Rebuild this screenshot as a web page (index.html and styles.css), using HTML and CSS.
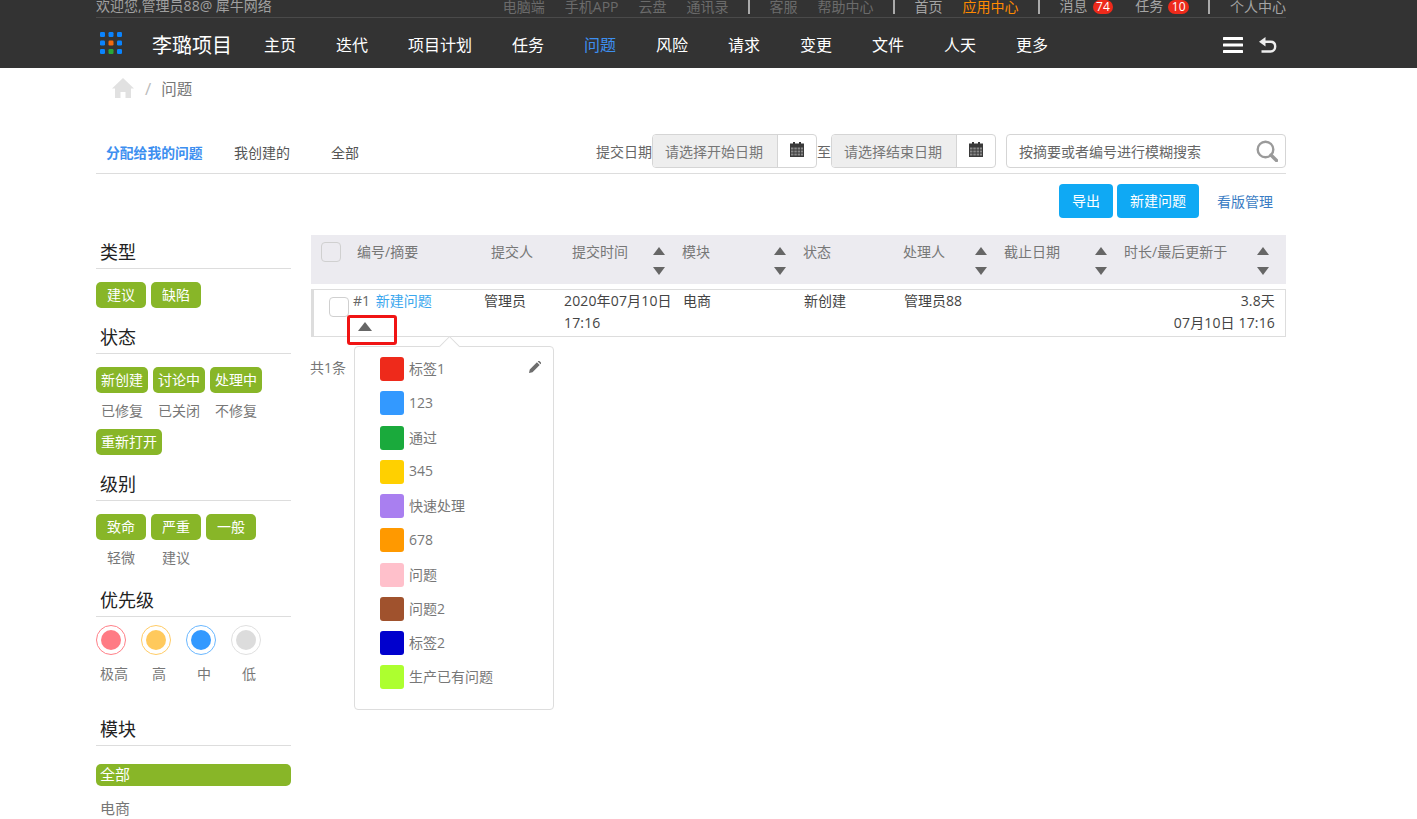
FILE: index.html
```html
<!DOCTYPE html>
<html lang="zh-CN">
<head>
<meta charset="utf-8">
<title>问题</title>
<link rel="stylesheet" href="styles.css">
</head>
<body>
<header class="topbar">
  <div class="wrap">
    <div class="strip">
      <span class="welcome">欢迎您,管理员88@ 犀牛网络</span>
      <div class="strip-links">
        <a class="dim">电脑端</a><a class="dim">手机APP</a><a class="dim">云盘</a><a class="dim">通讯录</a>
        <i class="sep"></i>
        <a class="dim">客服</a><a class="dim">帮助中心</a>
        <i class="sep"></i>
        <a>首页</a><a class="orange">应用中心</a>
        <i class="sep"></i>
        <a class="msg">消息<b class="count">74</b></a><a>任务<b class="count">10</b></a>
        <i class="sep"></i>
        <a>个人中心</a>
      </div>
    </div>
    <nav class="nav">
      <svg class="apps" width="24" height="24" viewBox="0 0 24 24">
        <rect x="1" y="1" width="5" height="5" rx="1.2" fill="#0a84ff"/><rect x="9.500" y="1" width="5" height="5" rx="1.2" fill="#0a84ff"/><rect x="18" y="1" width="5" height="5" rx="1.2" fill="#0a84ff"/>
        <rect x="1" y="9.500" width="5" height="5" rx="1.2" fill="#0a84ff"/><rect x="9.500" y="9.500" width="5" height="5" rx="1.2" fill="#f26a10"/><rect x="18" y="9.500" width="5" height="5" rx="1.2" fill="#0a84ff"/>
        <rect x="1" y="18" width="5" height="5" rx="1.2" fill="#0a84ff"/><rect x="9.500" y="18" width="5" height="5" rx="1.2" fill="#2aa83a"/><rect x="18" y="18" width="5" height="5" rx="1.2" fill="#0a84ff"/>
      </svg>
      <span class="project">李璐项目</span>
      <div class="menu">
        <a>主页</a><a>迭代</a><a class="wide">项目计划</a><a>任务</a><a class="active">问题</a><a>风险</a><a>请求</a><a>变更</a><a>文件</a><a>人天</a><a>更多</a>
      </div>
      <div class="nav-icons">
        <svg width="21" height="16" viewBox="0 0 21 16"><rect y="0" width="20" height="3" rx="0.500" fill="#fff"/><rect y="6.500" width="20" height="3" rx="0.500" fill="#fff"/><rect y="13" width="20" height="3" rx="0.500" fill="#fff"/></svg>
        <svg width="18" height="16" viewBox="0 0 18 16"><path d="M0 4.800 6.500 0V9.600Z" fill="#eee"/><path d="M5 4.800H11.500C14.500 4.800 16.200 6.800 16.200 9.500S14.500 14.500 11.500 14.500H2.500" fill="none" stroke="#eee" stroke-width="2.400"/></svg>
      </div>
    </nav>
  </div>
</header>

<div class="wrap">
  <div class="crumbs">
    <svg width="22" height="20" viewBox="0 0 22 20"><path d="M11 0 0 10.500h3V20h5.500v-6h5v6H19v-9.500h3Z" fill="#e1e1e1"/></svg>
    <span class="slash">/</span>
    <span>问题</span>
  </div>

  <div class="tabs">
    <div class="tab-list">
      <a class="tab on">分配给我的问题</a><a class="tab t2">我创建的</a><a class="tab t3">全部</a>
    </div>
    <div class="filters">
      <span class="flabel">提交日期</span>
      <div class="date"><span class="date-text">请选择开始日期</span><span class="date-btn"><svg width="14" height="15" viewBox="0 0 14 15"><path d="M3 0h2v1.500h4V0h2v1.500h3V15H0V1.500h3Z" fill="#3a3a3a"/><path d="M1 5.500h2.500v2H1Zm3.300 0h2.500v2H4.300Zm3.300 0h2.500v2H7.600Zm3.300 0h2.100v2h-2.100ZM1 8.500h2.500v2H1Zm3.300 0h2.500v2H4.300Zm3.300 0h2.500v2H7.600Zm3.300 0h2.100v2h-2.100ZM1 11.500h2.500v2H1Zm3.300 0h2.500v2H4.300Zm3.300 0h2.500v2H7.600Zm3.300 0h2.100v2h-2.100Z" fill="#8a8a8a"/></svg></span></div>
      <span class="fto">至</span>
      <div class="date"><span class="date-text">请选择结束日期</span><span class="date-btn"><svg width="14" height="15" viewBox="0 0 14 15"><path d="M3 0h2v1.500h4V0h2v1.500h3V15H0V1.500h3Z" fill="#3a3a3a"/><path d="M1 5.500h2.500v2H1Zm3.300 0h2.500v2H4.300Zm3.300 0h2.500v2H7.600Zm3.300 0h2.100v2h-2.100ZM1 8.500h2.500v2H1Zm3.300 0h2.500v2H4.300Zm3.300 0h2.500v2H7.600Zm3.300 0h2.100v2h-2.100ZM1 11.500h2.500v2H1Zm3.300 0h2.500v2H4.300Zm3.300 0h2.500v2H7.600Zm3.300 0h2.100v2h-2.100Z" fill="#8a8a8a"/></svg></span></div>
      <div class="search"><span>按摘要或者编号进行模糊搜索</span>
        <svg width="22" height="22" viewBox="0 0 22 22"><circle cx="9.500" cy="9.500" r="7.800" fill="none" stroke="#9a9a9a" stroke-width="2.400"/><path d="m15 15 5.500 5.500" stroke="#9a9a9a" stroke-width="3.400" stroke-linecap="round"/></svg>
      </div>
    </div>
  </div>

  <div class="actions">
    <a class="btn">导出</a><a class="btn">新建问题</a><a class="board">看版管理</a>
  </div>

  <div class="columns">
    <aside class="side">
      <h3>类型</h3>
      <div class="chips"><a class="chip on w50">建议</a><a class="chip on w50">缺陷</a></div>
      <h3 class="h-state">状态</h3>
      <div class="chips"><a class="chip on">新创建</a><a class="chip on">讨论中</a><a class="chip on">处理中</a><a class="chip">已修复</a><a class="chip">已关闭</a><a class="chip">不修复</a><a class="chip on">重新打开</a></div>
      <h3 class="h-level">级别</h3>
      <div class="chips"><a class="chip on w50">致命</a><a class="chip on w50">严重</a><a class="chip on w50">一般</a><a class="chip w50">轻微</a><a class="chip w50">建议</a></div>
      <h3 class="h-pri">优先级</h3>
      <div class="prio">
        <div class="p"><span class="ring r1"><i></i></span><small>极高</small></div>
        <div class="p"><span class="ring r2"><i></i></span><small>高</small></div>
        <div class="p"><span class="ring r3"><i></i></span><small>中</small></div>
        <div class="p"><span class="ring r4"><i></i></span><small>低</small></div>
      </div>
      <h3 class="h-mod">模块</h3>
      <a class="mod on">全部</a>
      <a class="mod">电商</a>
    </aside>

    <main class="main">
      <div class="thead">
        <span class="check"></span>
        <span>编号/摘要</span>
        <span>提交人</span>
        <span class="sort">提交时间<span class="arrows"><i class="up"></i><i class="down"></i></span></span>
        <span class="sort">模块<span class="arrows"><i class="up"></i><i class="down"></i></span></span>
        <span>状态</span>
        <span class="sort">处理人<span class="arrows"><i class="up"></i><i class="down"></i></span></span>
        <span class="sort">截止日期<span class="arrows"><i class="up"></i><i class="down"></i></span></span>
        <span class="sort">时长/最后更新于<span class="arrows"><i class="up"></i><i class="down"></i></span></span>
      </div>
      <div class="trow">
        <span class="check rowcheck"></span>
        <div class="summary">#1 <a>新建问题</a></div>
        <div>管理员</div>
        <div class="nums">2020年07月10日<br>17:16</div>
        <div>电商</div>
        <div>新创建</div>
        <div>管理员88</div>
        <div></div>
        <div class="right nums">3.8天<br>07月10日 17:16</div>
        <div class="redbox"><i class="up"></i></div>
      </div>
      <div class="total">共1条</div>

      <div class="popup">
        <svg class="edit" width="12" height="12" viewBox="0 0 13 13"><path d="M0 13l.8-3.800L8.600 1.400l3 3-7.800 7.800ZM9.500.5 10 0c.4-.3 1-.3 1.300 0l1.700 1.700c.3.300.3.900 0 1.300l-.5.500Z" fill="#6e6e6e"/></svg>
        <div class="tag"><i class="sw" style="background:#ee2a1b"></i>标签1</div>
        <div class="tag"><i class="sw" style="background:#3399ff"></i>123</div>
        <div class="tag"><i class="sw" style="background:#1aaa3c"></i>通过</div>
        <div class="tag"><i class="sw" style="background:#ffd000"></i>345</div>
        <div class="tag"><i class="sw" style="background:#a97ff0"></i>快速处理</div>
        <div class="tag"><i class="sw" style="background:#ff9900"></i>678</div>
        <div class="tag"><i class="sw" style="background:#ffc0cb"></i>问题</div>
        <div class="tag"><i class="sw" style="background:#a0522d"></i>问题2</div>
        <div class="tag"><i class="sw" style="background:#0000cd"></i>标签2</div>
        <div class="tag"><i class="sw" style="background:#adff2f"></i>生产已有问题</div>
      </div>
    </main>
  </div>
</div>
</body>
</html>
```
FILE: styles.css
```css
* { box-sizing: border-box; }
html, body { margin: 0; height: 819px; overflow: hidden; }
body {
  font-family: "Open Sans", "Noto Sans CJK SC", sans-serif;
  font-size: 14px;
  color: #333;
  background: #fff;
}
a { text-decoration: none; }
.wrap { width: 1190px; margin-left: 96px; }

.topbar { background: #333; height: 68px; }
.strip {
  height: 18px;
  border-bottom: 1px solid #4a4a4a;
  display: flex;
  justify-content: space-between;
  align-items: flex-start;
  line-height: 14px;
  color: #a0a0a0;
}
.welcome { margin-top: -1px; color: #a0a0a0; }
.strip-links { display: flex; align-items: center; margin-top: -1px; }
.strip-links a { color: #a5a5a5; margin-right: 20px; white-space: nowrap; }
.strip-links a.msg { margin-right: 22px; }
.strip-links a:last-child { margin-right: 0; }
.strip-links a.dim { color: #6b6b6b; }
.strip-links a.orange { color: #ff8a00; }
.sep { width: 2px; height: 14px; background: #aaa; margin-right: 20px; margin-left: -1px; }
.count {
  display: inline-block;
  background: #ee2a1b;
  color: #fff;
  border-radius: 7px;
  font-size: 12px;
  font-weight: 400;
  line-height: 14px;
  height: 14px;
  padding: 0 3.500px;
  margin-left: 5px;
}
.nav { height: 50px; display: flex; align-items: center; padding-top: 2px; }
.apps { margin: -2px 0 0 3px; flex: none; }
.project { color: #fff; font-size: 20px; margin-left: 29px; width: 112px; flex: none; white-space: nowrap; }
.menu { display: flex; }
.menu a { color: #fff; font-size: 16px; width: 72px; white-space: nowrap; }
.menu a.wide { width: 104px; }
.menu a.active { color: #3d8ff0; }
.nav-icons { margin-left: auto; display: flex; align-items: center; gap: 15px; padding: 2px 9px 0 0; }

.crumbs {
  height: 42px;
  display: flex;
  align-items: center;
  padding-left: 16px;
  padding-bottom: 1px;
  color: #777;
  font-size: 15.500px;
}
.crumbs svg { margin-top: -2px; }
.slash { color: #bbb; margin: 0 10px 0 11px; font-size: 17px; }

.tabs {
  margin-top: 24px;
  height: 40px;
  border-bottom: 1px solid #ddd;
  display: flex;
  justify-content: space-between;
  align-items: flex-start;
}
.tab-list { display: flex; padding-top: 8px; }
.tab { font-size: 14px; color: #555; }
.tab.t2 { width: 97px; }
.tab.on { color: #3d8ff0; font-weight: 600; font-size: 13.800px; margin-left: 10px; width: 128px; white-space: nowrap; }
.filters { display: flex; align-items: center; }
.flabel, .fto { font-size: 14px; color: #666; white-space: nowrap; }
.flabel { margin-top: -1px; }
.date {
  width: 165px;
  height: 34px;
  border: 1px solid #d5d5d5;
  border-radius: 4px;
  display: flex;
  overflow: hidden;
}
.fto { width: 14px; }
.date-text {
  flex: 1;
  background: #eee;
  color: #777;
  font-size: 14px;
  line-height: 33px;
  padding-left: 12px;
  border-right: 1px solid #d5d5d5;
  white-space: nowrap;
}
.date-btn { width: 38px; flex: none; display: flex; align-items: center; justify-content: center; padding-bottom: 3px; }
.search {
  width: 280px;
  height: 34px;
  margin-left: 10px;
  border: 1px solid #d5d5d5;
  border-radius: 4px;
  display: flex;
  align-items: center;
  justify-content: space-between;
  padding: 0 7px 0 12px;
  font-size: 14px;
  color: #666;
}

.actions {
  height: 34px;
  margin-top: 10px;
  display: flex;
  justify-content: flex-end;
  align-items: center;
}
.btn {
  height: 34px;
  line-height: 33px;
  padding: 0 13px;
  background: #0fa9f4;
  border-radius: 4px;
  color: #fff;
  font-size: 14px;
  margin-right: 4px;
}
.board { color: #3a7cc4; font-size: 14px; margin: 0 13px 0 14px; }

.columns { display: flex; margin-top: 17px; }
.side { width: 195px; flex: none; }
.side h3 {
  margin: 0;
  padding-left: 4px;
  height: 34px;
  line-height: 34px;
  font-size: 18px;
  font-weight: 400;
  color: #222;
  border-bottom: 1px solid #ddd;
}
.side h3.h-state { margin-top: 7px; }
.side h3.h-level { margin-top: 7px; }
.side h3.h-pri { margin-top: 7px; }
.side h3.h-mod { margin-top: 28px; }
.chips { display: flex; flex-wrap: wrap; column-gap: 5px; padding-top: 13px; }
.chip {
  height: 26px;
  line-height: 25px;
  margin-bottom: 5px;
  padding: 0 5px;
  border-radius: 5px;
  font-size: 14px;
  color: #777;
  text-align: center;
  white-space: nowrap;
}
.chip.w50 { width: 50px; padding: 0; }
.chip.w50:nth-child(3) { margin-right: 20px; }
.chip.on { background: #88b628; color: #fff; }
.prio { display: flex; gap: 15px; padding-top: 8px; }
.p { width: 30px; display: flex; flex-direction: column; align-items: center; }
.p small { font-size: 14px; color: #777; margin: 9px 0 0 6px; line-height: 20px; white-space: nowrap; }
.ring {
  width: 30px;
  height: 30px;
  border-radius: 50%;
  border: 1px solid;
  display: flex;
  align-items: center;
  justify-content: center;
}
.ring i { width: 20px; height: 20px; border-radius: 50%; }
.r1 { border-color: #ff8088; } .r1 i { background: #ff7b84; }
.r2 { border-color: #ffcc66; } .r2 i { background: #ffc95c; }
.r3 { border-color: #6bb8ff; } .r3 i { background: #3399ff; }
.r4 { border-color: #e0e0e0; } .r4 i { background: #dcdcdc; }
.mod {
  display: block;
  height: 22px;
  line-height: 21px;
  padding-left: 4px;
  border-radius: 5px;
  font-size: 15px;
  color: #777;
  margin-top: 18px;
}
.mod.on { background: #88b628; color: #fff; }
.mod + .mod { margin-top: 12px; }

.main { margin-left: 20px; width: 975px; position: relative; }
.thead {
  height: 49px;
  background: #ecebf0;
  display: grid;
  grid-template-columns: 36px 134px 81px 110px 121px 100px 101px 120px 162px;
  padding-left: 10px;
  padding-top: 7px;
  color: #777;
  font-size: 14px;
  line-height: 20px;
}
.check { width: 20px; height: 20px; border: 1px solid #d0d0d0; border-radius: 4px; background: transparent; }
.sort { position: relative; }
.arrows { position: absolute; right: 17px; top: 5px; display: flex; flex-direction: column; gap: 12px; }
.up { display: block; width: 0; height: 0; border-left: 6.500px solid transparent; border-right: 6.500px solid transparent; border-bottom: 8px solid #666; }
.down { display: block; width: 0; height: 0; border-left: 6.500px solid transparent; border-right: 6.500px solid transparent; border-top: 8px solid #666; }
.trow {
  position: relative;
  margin-top: 5px;
  height: 48px;
  border: 1px solid #ddd;
  border-left: 3px solid #ddd;
  display: grid;
  grid-template-columns: 39px 131px 80px 119px 121px 100px 100px 120px 1fr;
  padding: 0 10px 0 0;
  line-height: 22px;
  font-size: 14px;
  color: #444;
}
.nums { letter-spacing: .15px; white-space: nowrap; }
.rowcheck { background: #fff; margin: 7px 0 0 15px; }
.summary { color: #666; white-space: nowrap; }
.summary a { color: #3aa7ee; margin-left: 2px; }
.right { text-align: right; }
.redbox {
  position: absolute;
  left: 33px;
  top: 25px;
  width: 50px;
  height: 30px;
  border: 3px solid #f01414;
  border-radius: 3px;
  padding: 4px 0 0 8px;
}
.redbox .up { border-left-width: 7.500px; border-right-width: 7.500px; border-bottom-width: 9px; }
.total { margin-top: 20px; font-size: 14px; color: #777; line-height: 22px; margin-left: -1px; }

.popup {
  position: absolute;
  left: 43px;
  top: 111px;
  width: 200px;
  height: 364px;
  background: #fff;
  border: 1px solid #ddd;
  border-radius: 4px;
  padding-top: 4px;
}
.popup::before {
  content: "";
  position: absolute;
  left: 87px;
  top: -8px;
  width: 14px;
  height: 14px;
  background: #fff;
  border-left: 1px solid #ddd;
  border-top: 1px solid #ddd;
  transform: rotate(45deg);
}
.edit { position: absolute; right: 12px; top: 14px; }
.tag {
  position: relative;
  height: 34.250px;
  display: flex;
  align-items: center;
  padding-left: 25px;
  font-size: 14px;
  color: #777;
}
.sw { width: 24px; height: 24px; border-radius: 3px; margin: 2px 5px 0 0; flex: none; }
```
